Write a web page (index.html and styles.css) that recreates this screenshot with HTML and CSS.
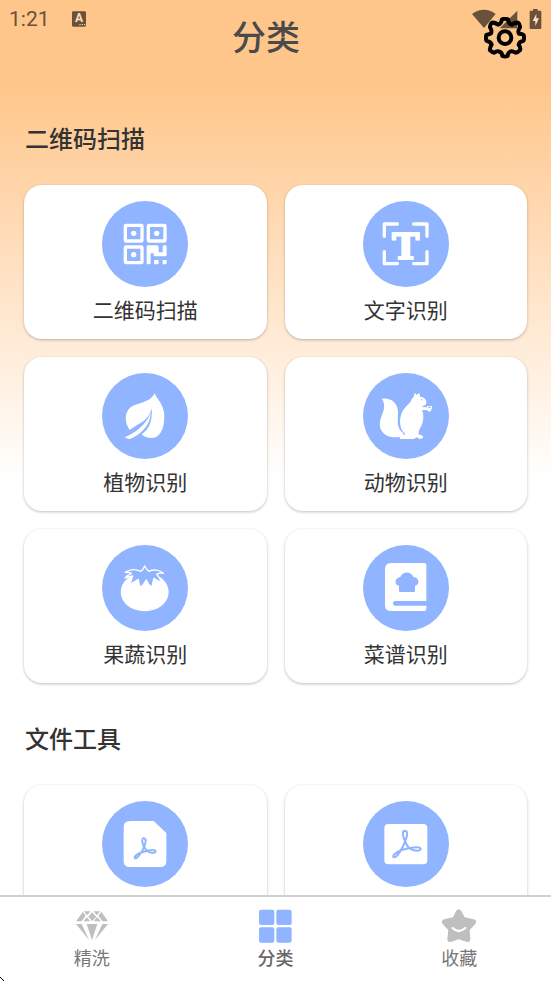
FILE: index.html
```html
<!DOCTYPE html>
<html lang="zh-CN">
<head>
<meta charset="utf-8">
<meta name="viewport" content="width=device-width, initial-scale=1">
<title>分类</title>
<link rel="stylesheet" href="styles.css">
</head>
<body>
<div class="status">
  <span class="time">1:21</span>
  <svg class="status-app" viewBox="0 0 42 46" aria-hidden="true"><rect width="42" height="46" rx="4"/><text x="21" y="33" text-anchor="middle">A</text><path d="M22 40h4m3 0h4m3 0h4"/></svg>
  <svg class="status-icons" viewBox="588 24 210 60" aria-hidden="true">
    <path d="M588 39Q624 14 659 39L624 81Z"/>
    <path d="M724 29V82H671Z"/>
    <path d="M771 24h14v5h8q3 0 3 3v49q0 3-3 3h-29q-3 0-3-3V32q0-3 3-3h7Z"/>
    <path class="bolt" d="M781 38L770 60h8v15l11-23h-8Z"/>
  </svg>
</div>
<header class="header">
  <h1>分类</h1>
  <button class="settings" type="button" aria-label="设置">
    <svg viewBox="625 53 126 126" aria-hidden="true">
      <path d="M679 60Q688 57 697 60Q699 75 709 76Q718 69 727 70Q734 75 733 84Q725 95 730 103Q742 104 744 107Q746 115 744 124Q731 126 729 136Q736 146 733 153Q728 159 719 160Q708 153 702 158Q697 160 696 170Q688 173 680 170Q679 160 673 158Q665 153 656 160Q648 159 643 153Q641 146 648 136Q645 126 632 124Q630 115 632 107Q643 104 646 102Q650 94 643 84Q642 75 649 70Q658 69 667 76Q677 74 679 60Z"/>
      <circle cx="688" cy="115" r="19"/>
    </svg>
  </button>
</header>
<main class="content">
  <section>
    <h2>二维码扫描</h2>
    <div class="cards">
      <a class="card" href="#">
        <svg viewBox="262 77 258 258" aria-hidden="true">
          <g class="line"><rect x="332" y="150" width="50" height="47" rx="2"/><rect x="401" y="150" width="50" height="47" rx="2"/><rect x="332" y="215" width="50" height="47" rx="2"/></g>
          <circle cx="357" cy="174" r="8"/><circle cx="426" cy="174" r="8"/><circle cx="357" cy="238" r="8"/>
          <path d="M400 210h26q6 0 6 6v15h12v-17q0-4 4-4h4q4 0 4 4v25q0 4-4 4h-31q-4 0-4-4v-5h-9v29q0 4-4 4h-4q-4 0-4-4v-49q0-4 4-4Z"/>
          <rect x="418" y="254" width="14" height="13" rx="3"/><path d="M444 254h12v8q0 5-5 5h-7Z"/>
        </svg>
        <span>二维码扫描</span>
      </a>
      <a class="card" href="#">
        <svg viewBox="264 77 258 258" aria-hidden="true">
          <path class="line" d="M328 183V146H367M416 146H456V183M328 229V265H367M416 265H456V229"/>
          <text class="letter" x="392" y="250" text-anchor="middle">T</text>
        </svg>
        <span>文字识别</span>
      </a>
      <a class="card" href="#">
        <svg viewBox="38 37 258 258" aria-hidden="true">
          <path d="M196 98C202 114 219 128 224 154C229 199 213 232 188 232C175 232 164 229 157 221C178 207 190 184 187 143C182 163 173 173 163 181C149 190 135 198 121 208C104 184 106 154 124 140C142 126 182 128 196 98Z"/>
          <path d="M107 230C130 219 147 208 160 194C172 181 179 170 184 156C184 195 149 225 121 235C114 234 109 233 107 230Z"/>
        </svg>
        <span>植物识别</span>
      </a>
      <a class="card" href="#">
        <svg viewBox="39 37 258 258" aria-hidden="true">
          <path d="M96 114C125 111 143 128 144 153C145 179 137 200 160 218L160 230H130C100 226 86 207 90 183C94 158 112 142 96 114Z"/>
          <path d="M191 108L194 96L200 102L208 97L211 108C222 109 228 116 230 124L227 132C220 136 216 137 214 139L231 140V136H246V140Q244 153 239 153Q233 153 231 148L216 149C225 168 218 193 207 209L206 222H213L220 228L216 234H207L201 230L191 235H150V222C157 223 163 223 166 220C147 205 147 176 156 155C164 136 181 130 184 117Z"/>
          <circle class="cut" cx="215" cy="117" r="2"/><path class="cut" d="M234 138h9v3h-9Z"/>
        </svg>
        <span>动物识别</span>
      </a>
      <a class="card" href="#">
        <svg viewBox="38 27 258 258" aria-hidden="true">
          <ellipse cx="166" cy="168" rx="72" ry="58"/>
          <path class="calyx" d="M108 109C123 98 142 99 154 106Q162 101 166 90Q172 102 179 106C192 99 211 101 222 112Q209 110 202 115Q211 124 216 140Q203 135 194 127Q190 142 187 154Q176 146 171 132Q163 144 154 155Q148 144 147 130Q137 139 119 145Q127 133 130 120Q119 121 107 126Q112 118 126 112Q119 108 108 109Z"/>
        </svg>
        <span>果蔬识别</span>
      </a>
      <a class="card" href="#">
        <svg viewBox="39 27 258 258" aria-hidden="true">
          <path d="M123 81H223Q229 81 229 87V195H137Q129 195 129 202T137 209H229V219Q229 225 223 225H123Q105 225 105 207V99Q105 81 123 81Z"/>
          <path class="cut" d="M147 165V149C133 148 132 126 151 123C157 105 184 105 190 123C210 125 209 148 195 149V165Q195 168 192 168H150Q147 168 147 165Z"/>
        </svg>
        <span>菜谱识别</span>
      </a>
    </div>
  </section>
  <section>
    <h2>文件工具</h2>
    <div class="cards">
      <a class="card card-last" href="#" aria-label="文件">
        <svg viewBox="307 60 258 258" aria-hidden="true">
          <path d="M391 120H462L500 156V240Q500 258 482 258H391Q372 258 372 240V138Q372 120 391 120Z"/>
          <path class="pdf" d="M433 198C427 186 425 171 433 172C441 173 438 188 433 198C427 213 414 232 406 232C401 228 412 219 423 215C438 210 465 203 468 210C468 219 448 216 441 208Q435 203 433 194"/>
        </svg>
      </a>
      <a class="card card-last" href="#" aria-label="PDF">
        <svg viewBox="260 60 258 258" aria-hidden="true">
          <rect x="324" y="129" width="129" height="121" rx="12"/>
          <path class="pdf" d="M386 180C378 166 377 149 386 149C396 150 393 167 386 181C379 201 363 229 353 229C345 226 357 214 376 207C397 201 430 195 433 203C434 213 409 210 399 201Q388 192 386 177"/>
        </svg>
      </a>
    </div>
  </section>
</main>
<nav class="tabs">
  <a href="#">
    <svg viewBox="225 386 102 102" aria-hidden="true"><path d="M249 394L257 407 244 423H228ZM252 393H272L261 405ZM280 393H300L291 405ZM304 394L324 423H308L295 407ZM261 411L271 423H250ZM276 396L289 409 277 422 265 409ZM291 411L303 423H281ZM228 431H245L267 479ZM260 431H292L276 480ZM307 431H324L285 479Z"/></svg>
    <span>精洗</span>
  </a>
  <a class="active" href="#" aria-current="page">
    <svg viewBox="775 386 102 102" aria-hidden="true"><rect x="778" y="388" width="46" height="46" rx="6"/><rect x="830" y="388" width="46" height="46" rx="6"/><rect x="778" y="441" width="46" height="46" rx="6"/><rect x="830" y="441" width="46" height="46" rx="6"/></svg>
    <span>分类</span>
  </a>
  <a href="#">
    <svg viewBox="499 386 102 102" aria-hidden="true"><path d="M541 392Q549 382 557 392L567 411 594 417Q606 421 599 431L582 449 584 476Q583 488 572 484L549 477 527 484Q515 487 515 476L518 449 501 431Q494 421 506 417L532 411Z"/><path class="smile" d="M531 443Q549 461 569 443"/></svg>
    <span>收藏</span>
  </a>
</nav>
<svg class="pointer" viewBox="0 0 4 4" aria-hidden="true"><path d="M0 0h1v1h1v1h-1v-1h-1zM2 2h1v1h-1zM3 3h1v1h-1z"/></svg>
</body>
</html>
```
FILE: styles.css
```css
* { box-sizing: border-box; }

body {
  margin: 0;
  height: 100vh;
  display: flex;
  flex-direction: column;
  overflow: hidden;
  position: relative;
  font-family: Roboto, "Noto Sans CJK SC", sans-serif;
  color: #333;
  background: linear-gradient(#ffc68b 0, #ffc68b 84px, #fff 480px) #fff;
}

h1, h2 { margin: 0; font-weight: 500; }
a { color: inherit; text-decoration: none; }
svg { display: block; }

.status {
  position: absolute;
  top: 8px;
  left: 9px;
  right: 9px;
  display: flex;
  align-items: center;
  color: #69513a;
  fill: currentColor;
}
.time { font-size: 21px; line-height: 22px; }
.status-app { width: 14px; height: 16px; margin-left: 22px; }
.status-app text { font: bold 36px Roboto, sans-serif; fill: #ffdfc0; }
.status-app path { stroke: #ffdfc0; stroke-width: 3; }
.status-icons { width: 70px; height: 20px; margin-left: auto; }
.bolt { fill: #ffdfc0; }

.header {
  flex: none;
  height: 83px;
  padding: 17px 25px 0 48px;
  display: flex;
  align-items: flex-start;
}
.header h1 {
  flex: 1;
  text-align: center;
  font-size: 34px;
  line-height: 42px;
  color: #4a4a4a;
}
.settings {
  position: relative;
  width: 42px;
  height: 42px;
  padding: 0;
  border: 0;
  background: none;
}
.settings svg {
  width: 100%;
  height: 100%;
  fill: none;
  stroke: #000;
  stroke-width: 12;
  stroke-linejoin: round;
}

.content { flex: 1; min-height: 0; overflow: hidden; padding: 0 24px; }
.content section { padding-top: 39px; }
.content h2 {
  padding-left: 1px;
  margin-bottom: 27px;
  font-size: 24px;
  line-height: 36px;
}
.cards { display: grid; grid-template-columns: 1fr 1fr; gap: 18px; }
.card {
  display: flex;
  flex-direction: column;
  align-items: center;
  padding: 16px 8px 13px;
  border-radius: 18px;
  background: #fff;
  box-shadow: 0 1px 3px rgba(0, 0, 0, .26);
}
.card svg {
  width: 86px;
  height: 86px;
  margin-bottom: 9px;
  border-radius: 50%;
  background: #90b4ff;
  fill: #fff;
}
.card-last { min-height: 154px; }
.card span { font-size: 21px; line-height: 30px; }
.card .line { fill: none; stroke: #fff; stroke-width: 10; stroke-linecap: round; stroke-linejoin: round; }
.card .letter { font: bold 108px "DejaVu Serif", serif; stroke: #fff; stroke-width: 6; }
.card .cut { fill: #90b4ff; }
.card .calyx { fill: #90b4ff; stroke: #fff; stroke-width: 4; stroke-linejoin: round; }
.card .pdf { fill: none; stroke: #90b4ff; stroke-width: 6; stroke-linejoin: round; }

.tabs {
  position: relative;
  flex: none;
  height: 86px;
  padding-top: 12px;
  display: grid;
  grid-template-columns: repeat(3, 1fr);
  border-top: 2px solid #d0d0d0;
  background: #fff;
  color: #777;
}
.tabs a { display: flex; flex-direction: column; align-items: center; }
.tabs svg { width: 34px; height: 34px; overflow: visible; fill: #bfbfbf; }
.tabs span { margin-top: 3px; font-size: 18px; line-height: 26px; }
.tabs .active { font-weight: 500; color: #666; }
.tabs .active svg { fill: #90b4ff; }
.tabs .smile { fill: none; stroke: #fff; stroke-width: 7; stroke-linecap: round; }

.pointer { position: absolute; left: 0; bottom: 0; width: 4px; height: 4px; }
```
